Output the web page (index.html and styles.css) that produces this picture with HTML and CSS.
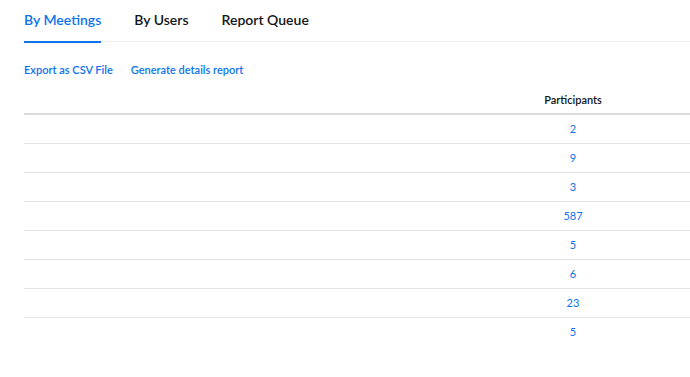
FILE: index.html
```html
<!DOCTYPE html>
<html lang="en">
<head>
    <meta charset="UTF-8">
    <title>Reports</title>
    <link rel="stylesheet" href="styles.css">
</head>
<body>

<div class="tabs">
    <a href="#" class="tab active">By Meetings</a>
    <a href="#" class="tab">By Users</a>
    <a href="#" class="tab">Report Queue</a>
</div>

<div class="actions">
    <a href="#">Export as CSV File</a>
    <a href="#">Generate details report</a>
</div>

<div class="report">
    <div class="row head">
        <div class="cell"></div>
        <div class="cell num">Participants</div>
    </div>
    <div class="row"><div class="cell"></div><div class="cell num"><a href="#">2</a></div></div>
    <div class="row"><div class="cell"></div><div class="cell num"><a href="#">9</a></div></div>
    <div class="row"><div class="cell"></div><div class="cell num"><a href="#">3</a></div></div>
    <div class="row"><div class="cell"></div><div class="cell num"><a href="#">587</a></div></div>
    <div class="row"><div class="cell"></div><div class="cell num"><a href="#">5</a></div></div>
    <div class="row"><div class="cell"></div><div class="cell num"><a href="#">6</a></div></div>
    <div class="row"><div class="cell"></div><div class="cell num"><a href="#">23</a></div></div>
    <div class="row last"><div class="cell"></div><div class="cell num"><a href="#">5</a></div></div>
</div>

</body>
</html>
```

FILE: styles.css
```css
body {
    font-family: Lato, "Open Sans", sans-serif;
    background-color: #fff;
    color: #232333;
    margin: 0;
    padding-left: 24px;
}
a {
    text-decoration: none;
    color: #0e72ed;
}

/* tabs */
.tabs {
    display: flex;
    gap: 33px;
    border-bottom: 1px solid #f0f0f2;
    height: 41px;
}
.tab {
    color: #131619;
    font-size: 14px;
    font-weight: 600;
    line-height: 18px;
    padding-top: 11px;
    box-sizing: border-box;
    height: 43px;
}
.tab.active {
    color: #0e72ed;
    border-bottom: 2px solid #0e72ed;
}

.actions {
    display: flex;
    gap: 18px;
    font-size: 11px;
    font-weight: 600;
    line-height: 14px;
    padding-top: 21px;
    height: 44px;
    box-sizing: border-box;
}

/* table */
.report {
    font-size: 11px;
    line-height: 14px;
}
.row {
    display: grid;
    grid-template-columns: 432px 1fr;
    height: 28px;
    align-items: center;
    border-bottom: 1px solid #e3e3e6;
}
.row.head {
    height: 29px;
    color: #131619;
    font-weight: 600;
    border-bottom: 2px solid #dcdce0;
    padding-top: 1px;
    box-sizing: border-box;
}
.row.last {
    border-bottom: none;
}
.num {
    text-align: center;
}
```
